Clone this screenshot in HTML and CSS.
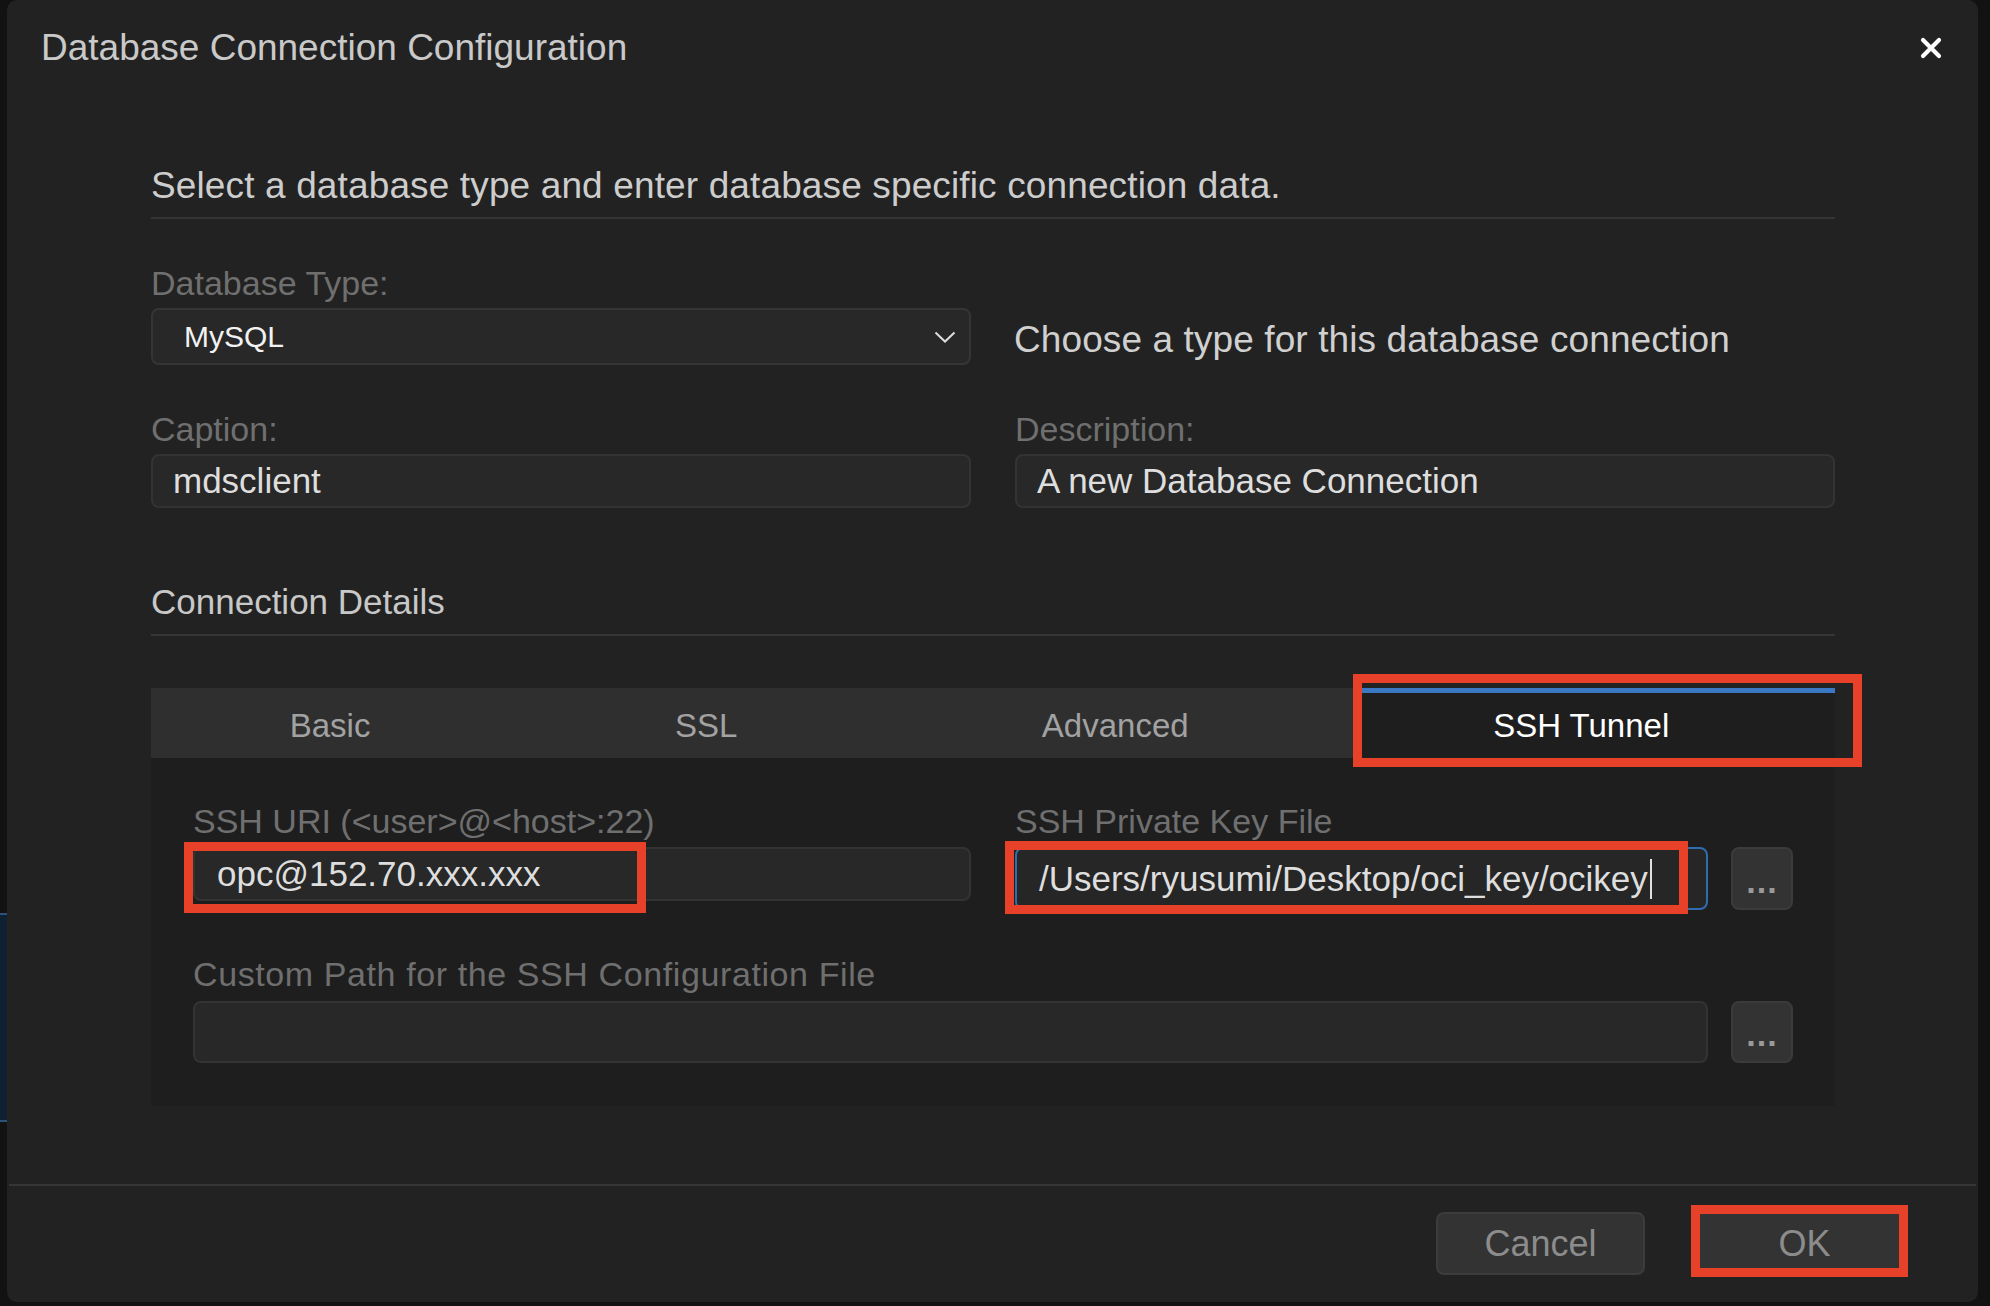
FILE: index.html
```html
<!DOCTYPE html>
<html lang="en">
<head>
<meta charset="utf-8">
<title>Database Connection Configuration</title>
<link rel="stylesheet" href="styles.css">
</head>
<body>
<div class="screen">
  <div class="backdrop-edge"><div class="backdrop-panel"></div></div>
  <div class="dialog">
    <header class="dlg-header">
      <h1 class="dlg-title">Database Connection Configuration</h1>
      <button class="close-btn" aria-label="Close">
        <svg width="22" height="22" viewBox="0 0 22 22"><path d="M3 3 L19 19 M19 3 L3 19" stroke="#ffffff" stroke-width="4.2" stroke-linecap="round" fill="none"/></svg>
      </button>
    </header>

    <main class="dlg-body">
      <p class="intro">Select a database type and enter database specific connection data.</p>

      <div class="field-row first">
        <div class="field">
          <label class="label">Database Type:</label>
          <div class="select">
            <span>MySQL</span>
            <svg class="chevron" width="22" height="12" viewBox="0 0 22 12"><polyline points="1.5,1.5 11,10.5 20.5,1.5" fill="none" stroke="#dddddd" stroke-width="2"/></svg>
          </div>
        </div>
        <div class="hint">Choose a type for this database connection</div>
      </div>

      <div class="field-row">
        <div class="field">
          <label class="label">Caption:</label>
          <div class="input">mdsclient</div>
        </div>
        <div class="field">
          <label class="label">Description:</label>
          <div class="input">A new Database Connection</div>
        </div>
      </div>

      <h2 class="section-title">Connection Details</h2>

      <div class="tabs">
        <div class="tab">Basic</div>
        <div class="tab">SSL</div>
        <div class="tab">Advanced</div>
        <div class="tab active">SSH Tunnel<span class="annot annot-tab"></span></div>
      </div>

      <div class="tab-panel">
        <div class="panel-row">
          <div class="field">
            <label class="label">SSH URI (&lt;user&gt;@&lt;host&gt;:22)</label>
            <div class="input-wrap">
              <div class="input uri">opc@152.70.xxx.xxx</div>
              <span class="annot annot-uri"></span>
            </div>
          </div>
          <div class="field">
            <label class="label">SSH Private Key File</label>
            <div class="file-row">
              <div class="input-wrap grow">
                <div class="input focused">/Users/ryusumi/Desktop/oci_key/ocikey<span class="caret"></span></div>
                <span class="annot annot-key"></span>
              </div>
              <button class="browse">...</button>
            </div>
          </div>
        </div>
        <div class="panel-row single">
          <div class="field">
            <label class="label wide">Custom Path for the SSH Configuration File</label>
            <div class="file-row low">
              <div class="input-wrap grow"><div class="input"></div></div>
              <button class="browse">...</button>
            </div>
          </div>
        </div>
      </div>
    </main>

    <footer class="dlg-footer">
      <button class="btn">Cancel</button>
      <button class="btn ok">OK<span class="annot annot-ok"></span></button>
    </footer>
  </div>
</div>
</body>
</html>
```

FILE: styles.css
```css
* {
  box-sizing: border-box;
}

html, body {
  margin: 0;
  padding: 0;
  background: #121212;
}

body {
  font-family: "Liberation Sans", Arial, Helvetica, sans-serif;
  color: #cccccc;
}

.screen {
  display: flex;
  width: 1990px;
  height: 1306px;
  overflow: hidden;
}

.backdrop-edge {
  width: 7px;
  flex: 0 0 7px;
  padding-top: 913px;
}

.backdrop-panel {
  height: 209px;
  background: #0d2131;
  border-top: 2px solid #2c5277;
  border-bottom: 2px solid #2c5277;
}

.dialog {
  width: 1971px;
  height: 1302px;
  flex: 0 0 1971px;
  background: #222222;
  border-radius: 10px;
  display: flex;
  flex-direction: column;
}

/* header */
.dlg-header {
  display: flex;
  justify-content: space-between;
  align-items: center;
  padding: 26px 36px 0 34px;
}

.dlg-title {
  margin: 0;
  font-size: 37px;
  line-height: 44px;
  font-weight: normal;
  color: #c9c9c9;
}

.close-btn {
  background: none;
  border: 0;
  padding: 0;
  width: 22px;
  height: 22px;
  display: flex;
}

/* body */
.dlg-body {
  flex: 1;
  padding: 94px 143px 0 144px;
}

.intro {
  margin: 0;
  font-size: 37px;
  line-height: 44px;
  letter-spacing: 0.13px;
  color: #cdcdcd;
  padding-bottom: 9px;
  border-bottom: 2px solid #353535;
}

.field-row {
  display: grid;
  grid-template-columns: 1fr 1fr;
  column-gap: 44px;
  margin-top: 44px;
}

.field {
  display: flex;
  flex-direction: column;
  min-width: 0;
}

.label {
  font-size: 34px;
  line-height: 40px;
  color: #6f6f6f;
  margin-bottom: 5px;
}

.label.wide {
  letter-spacing: 0.6px;
}

.select {
  height: 57px;
  background: #282828;
  border: 2px solid #353535;
  border-radius: 8px;
  display: flex;
  align-items: center;
  justify-content: space-between;
  padding: 0 13px 0 31px;
  font-size: 30px;
  color: #f2f2f2;
}

.hint {
  align-self: end;
  font-size: 37px;
  line-height: 44px;
  letter-spacing: 0.1px;
  color: #d0d0d0;
  padding-bottom: 3px;
  margin-left: -1px;
}

.input {
  height: 54px;
  background: #282828;
  border: 2px solid #333333;
  border-radius: 8px;
  display: flex;
  align-items: center;
  padding: 0 20px;
  font-size: 35px;
  color: #dedede;
  white-space: nowrap;
}

.input-wrap {
  position: relative;
}

.input-wrap.grow {
  flex: 1;
  display: flex;
  flex-direction: column;
}

.input-wrap.grow .input {
  height: 100%;
}

.section-title {
  margin: 73px 0 0;
  font-size: 35px;
  line-height: 42px;
  font-weight: normal;
  color: #c8c8c8;
  padding-bottom: 11px;
  border-bottom: 2px solid #353535;
}

/* tabs */
.tabs {
  margin-top: 52px;
  display: flex;
  height: 70px;
  background: #2f2f2f;
}

.tab {
  flex: 1 1 auto;
  display: flex;
  align-items: center;
  justify-content: center;
  padding-right: 27px;
  border-top: 5px solid transparent;
  font-size: 33px;
  color: #a2a2a2;
  white-space: nowrap;
}

.tab.active {
  position: relative;
  background: #1e1e1e;
  border-top-color: #3b78c4;
  color: #ffffff;
}

.tab-panel {
  background: #1e1e1e;
  padding: 43px 42px 43px 42px;
}

.panel-row {
  display: grid;
  grid-template-columns: 1fr 1fr;
  column-gap: 44px;
}

.panel-row.single {
  grid-template-columns: 1fr;
  margin-top: 44px;
}

.tab-panel .label {
  margin-bottom: 6px;
}

.tab-panel .input {
  padding-left: 22px;
}

.input.uri {
  height: 54px;
}

.file-row {
  display: flex;
  gap: 23px;
  height: 63px;
}

.file-row.low {
  height: 62px;
  margin-top: 1px;
}

.input.focused {
  border-color: #2f6cb0;
  background: #262626;
}

.caret {
  display: inline-block;
  width: 2px;
  height: 40px;
  background: #e0e0e0;
  margin-left: 2px;
}

.browse {
  width: 62px;
  flex: 0 0 62px;
  background: #333333;
  border: 2px solid #3b3b3b;
  border-radius: 8px;
  color: #9a9a9a;
  font-family: "Liberation Sans", Arial, sans-serif;
  font-size: 34px;
  font-weight: bold;
  letter-spacing: 1px;
  padding: 0;
  line-height: 1;
  display: flex;
  align-items: center;
  justify-content: center;
  padding-top: 4px;
}

/* footer */
.dlg-footer {
  height: 118px;
  border-top: 2px solid #363636;
  margin: 0 2px;
  display: flex;
  justify-content: flex-end;
  align-items: flex-start;
  gap: 50px;
  padding: 26px 72px 0 0;
}

.btn {
  width: 209px;
  height: 63px;
  background: #333333;
  border: 2px solid #3c3c3c;
  border-radius: 8px;
  font-family: "Liberation Sans", Arial, sans-serif;
  font-size: 36px;
  color: #8c8c8c;
  padding: 0;
}

.btn.ok {
  position: relative;
  padding-left: 10px;
}

/* red annotation frames */
.annot {
  position: absolute;
  border: 9px solid #e8412a;
  pointer-events: none;
}

.annot-tab {
  left: -1px;
  right: -27px;
  top: -19px;
  bottom: -9px;
}

.annot-uri {
  left: -9px;
  top: -5px;
  width: 462px;
  height: 71px;
}

.annot-key {
  left: -10px;
  top: -6px;
  width: 683px;
  height: 73px;
}

.annot-ok {
  left: -6px;
  right: -6px;
  top: -9px;
  bottom: -4px;
}
```
